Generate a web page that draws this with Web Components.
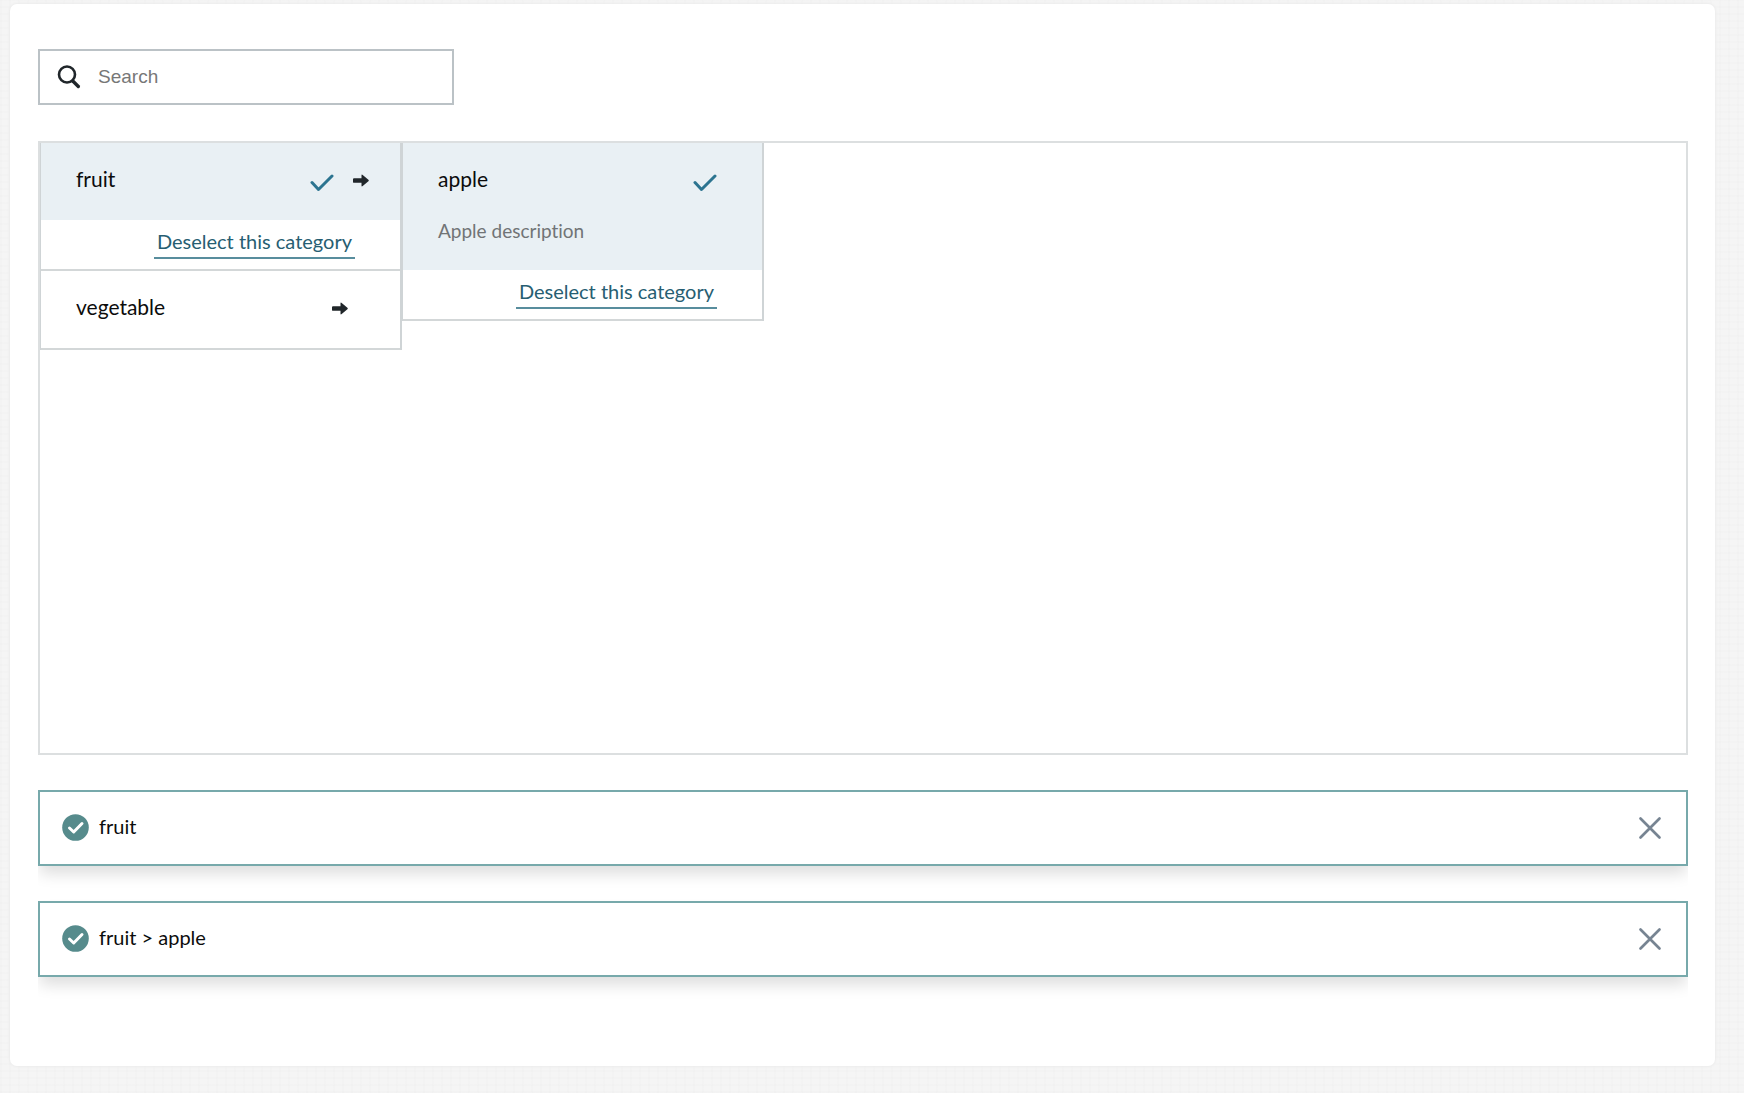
<!DOCTYPE html>
<html lang="en">
<head>
<meta charset="utf-8">
<title>Category picker</title>
<style>
  html { background: #fff; }
  body { margin: 0; font-family: Lato, "Liberation Sans", sans-serif; font-size: 20px; line-height: 26px; font-variant-ligatures: none; color: #0c0c0c; }
</style>
</head>
<body>
<page-shell>
  <search-field label="Search"></search-field>
  <category-tree>
    <category-column>
      <category-item name="fruit" selected parent></category-item>
      <category-item name="vegetable" parent></category-item>
    </category-column>
    <category-column>
      <category-item name="apple" selected>Apple description</category-item>
    </category-column>
  </category-tree>
  <selection-list>
    <selected-category>fruit</selected-category>
    <selected-category>fruit &gt; apple</selected-category>
  </selection-list>
</page-shell>

<script>
  class BaseElement extends HTMLElement {
    connectedCallback() {
      if (this.shadowRoot) return;
      this.attachShadow({ mode: "open" }).innerHTML =
        "<style>*{box-sizing:border-box}:host{box-sizing:border-box}button{font:inherit;margin:0;border:0;background:none;cursor:pointer}svg{display:block;flex:none}</style>" + this.render();
    }
  }

  const CHECK = '<svg class="check" width="24" height="18" viewBox="0 0 24 18" fill="none" stroke="#2c7490" stroke-width="3" stroke-linecap="round" stroke-linejoin="round" aria-hidden="true"><path d="M2 8.500 8.500 15.500 22 2"/></svg>';
  const ARROW = '<svg class="arrow" width="16" height="13" viewBox="0 0 16 13" fill="#20262a" aria-hidden="true"><path d="M1 4.300H8.500V1.400Q8.500 0 9.700 .9L15.400 5.700Q16.200 6.500 15.400 7.300L9.700 12.100Q8.500 13 8.500 11.600V8.800H1Q0 8.800 0 7.900V5.200Q0 4.300 1 4.300Z"/></svg>';

  customElements.define("page-shell", class extends BaseElement {
    render() {
      return `<style>
        :host { display: block; padding: 4px 29px 27px 10px; background-color: #f5f5f5;
          background-image: repeating-linear-gradient(0deg, rgba(0,0,0,.006) 0 2px, transparent 2px 7px),
                            repeating-linear-gradient(90deg, rgba(0,0,0,.006) 0 2px, transparent 2px 9px); }
        main { display: flex; flex-direction: column; background: #fff; border-radius: 7px;
          padding: 45px 27px 65px 28px; box-shadow: 0 0 2px 1px #ededed; }
      </style><main><slot></slot></main>`;
    }
  });

  customElements.define("search-field", class extends BaseElement {
    render() {
      const label = this.getAttribute("label");
      return `<style>
        :host { display: block; width: 416px; max-width: 100%; margin-bottom: 36px; }
        label { display: flex; align-items: center; gap: 17px; height: 56px; padding: 0 17px; border: 2px solid #bbc2c6; }
        input { flex: 1; min-width: 0; padding: 0; border: 0; outline: 0; background: none; color: #222;
          font: 19px/26px "Liberation Sans", Arial, sans-serif; }
        input::placeholder { color: #777; opacity: 1; }
      </style>
      <label>
        <svg width="24" height="24" viewBox="0 0 24 24" fill="none" stroke="#20262a" stroke-linecap="round" aria-hidden="true">
          <circle cx="10" cy="9.500" r="8" stroke-width="2.600"/><path d="M15.800 16 21.300 21.500" stroke-width="3.400"/>
        </svg>
        <input type="text" placeholder="${label}" aria-label="${label}">
      </label>`;
    }
  });

  customElements.define("category-tree", class extends BaseElement {
    render() {
      return `<style>
        :host { display: flex; align-items: flex-start; min-height: 614px; border: 2px solid #dcdfe0; }
      </style><slot></slot>`;
    }
  });

  customElements.define("category-column", class extends BaseElement {
    render() {
      return `<style>
        :host { display: block; flex: 0 0 362px; border: solid #cfd4d6; border-width: 0 2px 0 1px; }
      </style><slot></slot>`;
    }
  });

  customElements.define("category-item", class extends BaseElement {
    render() {
      const selected = this.hasAttribute("selected");
      const parent = this.hasAttribute("parent");
      const described = this.textContent.trim() !== "";
      return `<style>
        :host { display: block; border-bottom: 2px solid #d3d7d8; }
        .head { display: block; width: 100%; padding: 24px 31px 27px 35px; color: inherit; text-align: left; }
        :host([selected]) .head { background: #e9f0f4; }
        .row { display: flex; align-items: center; gap: 19px; height: 26px; }
        .name { flex: 1; padding-bottom: 2px; font-size: 21px; }
        .row.alone { padding-right: 14px; }
        :host(:not([selected])) .row { padding-right: 21px; }
        .check { margin-top: 6px; }
        .description { display: block; margin-top: 25px; padding-bottom: 25px; font-size: 19px; height: 25px; color: #717476; }
        .foot { display: flex; justify-content: flex-end; height: 49px; padding: 8px 45px 10px 0; }
        .foot button { padding: 0 3px 3px; color: #275e72; border-bottom: 2px solid #588d9d; }
      </style>
      <button type="button" class="head">
        <span class="row${parent ? "" : " alone"}"><span class="name">${this.getAttribute("name")}</span>${selected ? CHECK : ""}${parent ? ARROW : ""}</span>
        ${described ? '<span class="description"><slot></slot></span>' : ""}
      </button>
      ${selected ? '<div class="foot"><button type="button">Deselect this category</button></div>' : ""}`;
    }
  });

  customElements.define("selection-list", class extends BaseElement {
    render() {
      return `<style>
        :host { display: flex; flex-direction: column; gap: 35px; margin-top: 35px; padding-bottom: 24px; overflow: hidden; }
      </style><slot></slot>`;
    }
  });

  customElements.define("selected-category", class extends BaseElement {
    render() {
      return `<style>
        :host { display: flex; align-items: center; gap: 10px; height: 76px; padding: 0 24px 1px 22px;
          border: 2px solid #77a9ab; background: #fff; box-shadow: 0 10px 14px -2px rgba(0,0,0,.13); }
        .name { flex: 1; padding-bottom: 3px; }
        button { padding: 0; }
      </style>
      <svg width="27" height="27" viewBox="0 0 27 27" aria-hidden="true"><circle cx="13.500" cy="13.500" r="13.300" fill="#568b8c"/><path d="M7.500 14 11.700 18 20 9.500" fill="none" stroke="#fff" stroke-width="3" stroke-linecap="round" stroke-linejoin="round"/></svg>
      <span class="name"><slot></slot></span>
      <button type="button" aria-label="Remove"><svg width="24" height="24" viewBox="0 0 24 24" fill="none" stroke="#778492" stroke-width="2.700" stroke-linecap="round" aria-hidden="true"><path d="M2.500 2.500 21.500 21.500M21.500 2.500 2.500 21.500"/></svg></button>`;
    }
  });
</script>
</body>
</html>
